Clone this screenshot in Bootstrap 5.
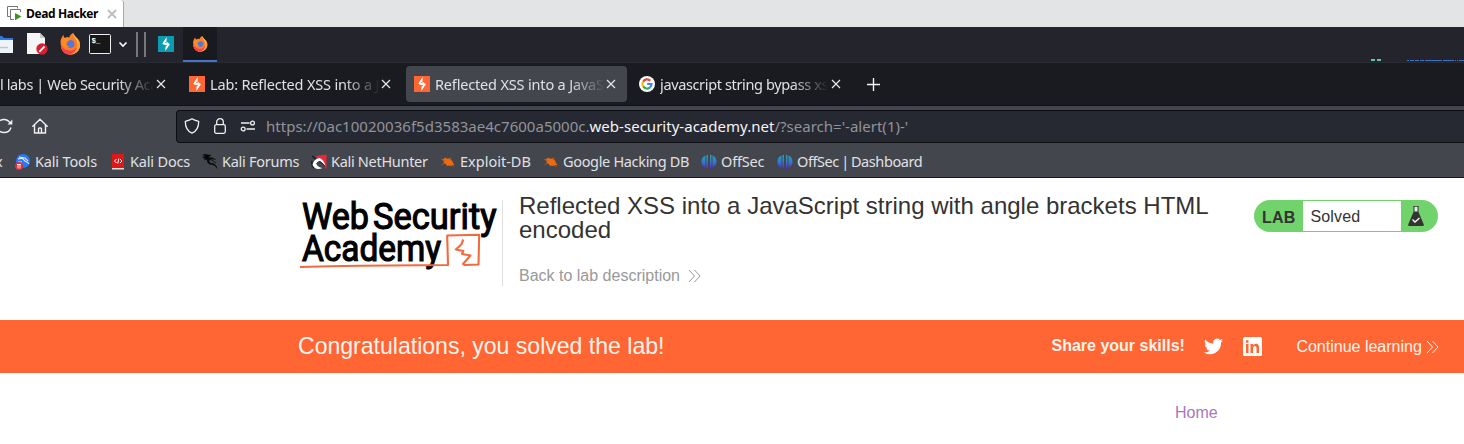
<!DOCTYPE html>
<html lang="en">
<head>
<meta charset="utf-8">
<title>Dead Hacker</title>
<meta name="viewport" content="width=device-width, initial-scale=1">
<link href="https://cdn.jsdelivr.net/npm/bootstrap@5.3.0/dist/css/bootstrap.min.css" rel="stylesheet">
<style>
body{font-family:"Liberation Sans",Arial,sans-serif;background:#fff;width:1464px;height:444px;overflow:hidden;color:#333332}
svg{display:block;flex:none}
.chrome{font-family:"Noto Sans",sans-serif;font-size:14.5px;letter-spacing:-.17px;line-height:20px;color:#e0e0e4;white-space:nowrap}
.vmbar{height:27px;background:#e3e4e6}
.vmtab{width:124px;height:27px;background:#fff;border-right:1px solid #aaa;border-top-right-radius:3px;padding-left:7px;font:bold 12px/27px "Open Sans","Noto Sans",sans-serif;color:#000}
.vmtab span{width:81px;margin-left:4px;letter-spacing:-.4px}
.panel{height:35px;background:#23242c;position:relative}
.panel .task{width:34px;height:35px;background:#191a1f;border-bottom:2px solid #4276c9;margin-left:9px;padding-left:9px}
.sep{width:2px;height:25px;background:#77787c}
.glimpse{position:absolute;right:0;bottom:0}
.tabs{height:44px;background:#1a1b20;border-top:1px solid #2a2b32;border-bottom:1px solid #101115;padding-top:3px}
.tabx{height:36px;border-radius:4px;padding-left:8px;margin-right:4px}
.tabx.on{background:#44464d}
.tabx .t{overflow:hidden;padding-bottom:1px;-webkit-mask-image:linear-gradient(90deg,#000 calc(100% - 36px),transparent);mask-image:linear-gradient(90deg,#000 calc(100% - 36px),transparent)}
.tools{height:71px;background:#44464d;overflow:hidden}
.toprow{height:37px;padding-top:4px}
.url{margin-left:121px;height:33px;background:#272932;border:1px solid #0d0e12;border-right:0;border-radius:4px 0 0 4px;color:#92939a;padding-left:7px}
.url svg{margin-bottom:1px}
.url span{font-size:15px;letter-spacing:.02px;padding-bottom:2px}
.url b{font-weight:400;color:#f4f4f6}
.marks{height:38px;padding-left:15px;position:relative}
.mk{gap:4px}
.marks span{padding-bottom:2px}
.edge{height:1px;background:#14151a}
.labhead{height:142px;padding-left:298px}
.brand{width:205px;height:86px;margin-top:22px;border-right:1px solid #e0e0e0}
.title{width:705px;margin:16px 0 0 16px}
.title h2{font-size:24px;line-height:24px;font-weight:400;margin:0;color:#333332}
.title a{font-size:16px;line-height:20px;color:#999;text-decoration:none;margin-top:24px}
.status{margin:22px 0 0 30px;width:184px;height:32px;border-radius:16px;background:#70d36c;font-size:16px;line-height:32px}
.status b{width:49px;padding-left:8px;letter-spacing:.2px;line-height:35px}
.status span{width:98px;height:30px;margin-top:1px;background:#fff;padding-left:7.5px;line-height:31px;letter-spacing:.15px}
.solved{height:53px;background:#f63;color:#fff3ec;padding-left:298px}
.solved p{font-size:23.05px;margin:0;width:753.5px;line-height:50px;padding-bottom:2px}
.homelink{font-size:16px;line-height:20px;color:#a877bc;text-decoration:none;margin:30px 0 0 1175px;display:block}
</style>
</head>
<body>
<svg width="0" height="0" class="position-absolute">
<defs>
<symbol id="bolt" viewBox="0 0 16 16"><path d="M8.700 1 8.500 5.300 6.900 7 8.600 7.300 8.500 5.600 11.900 8.300 9.700 11.600 7.300 14.900 7.500 10.800 9.200 9 5.700 8.700 4.300 7.400z" fill="#fff"/></symbol>
<symbol id="x" viewBox="0 0 10 10"><path d="M1 1l8 8M9 1L1 9" stroke="#e8e8ea" stroke-width="1.150" fill="none"/></symbol>
<symbol id="fox" viewBox="0 0 24 24"><path d="M2 12C1 8 3 4 5 2c0 2 .5 3 1.500 3.500C8 4 10 4 11 5c1-3 3-4.500 4.500-5 0 2 1.500 3 3 4.500C22 7 23 9 23 13c0 6-5 10.500-11 10.500S2 19 2 12z" fill="#ff7b27"/><path d="M15.500 0C15 5 20 6 20 12c0 5-4 7-8 7-5 0-8-3-10-7 0 7 4 11.500 10 11.500S23 19 23 13c0-6-6-8-7.500-13z" fill="#ffa032"/><path d="M2 12c2 5 6 7 10 7 4 0 6-1.500 7.500-4 0 4-4 8.500-8.500 8.500C6 23.500 2 19 2 12z" fill="#f5404f"/><path d="M15.500 0C15 4 20.500 6 20.500 13 23 8 17 5 15.500 0z" fill="#ffdc3e"/><circle cx="12.500" cy="12" r="4.300" fill="#5078d8"/><path d="M2 10c1-3 2-4 4.500-4.500 2 0 5 .5 6 1.500-1 2-4 2-4.500 3.500-.5 2 .5 4 4 4.500-4 2-9-1-10-5z" fill="#ff8a1f"/></symbol>
<symbol id="chev" viewBox="0 0 13 14"><path d="M1 1l5.500 6L1 13M6.500 1L12 7l-5.500 6" fill="none" stroke="currentColor" stroke-width="1"/></symbol>
<symbol id="bug" viewBox="0 0 16 16"><path d="M2 5.500l2-.8 1-1.200 1.500 1 3.500.3 2.300 2.200 1 2.500 1.200 1.500-2.500.2-1.500.8-2.500-.4-1 .6-.3-1.300-1.700-1.300-1.500-.3.500-1.500z" fill="#f06a0c"/><path d="M1 5l5 2M1.500 10.500l4-1.500M10 11l3.800 1.500M9 4l3 .5" stroke="#b35a1c" stroke-width=".7"/></symbol>
<linearGradient id="og" x1="0" y1="0" x2="0" y2="1"><stop offset="0" stop-color="#20a5b5"/><stop offset=".5" stop-color="#3378d1"/><stop offset="1" stop-color="#5726c8"/></linearGradient>
<symbol id="off" viewBox="0 0 16 16"><path d="M4.500 1.500v12Q.5 12 .5 7.500T4.500 1.500zM5.500 1.200 7 .8v14.400l-1.500-1zM9 .8l1.500.4v13L9 15.200zM11.500 1.500q4 1.500 4 6t-4 6z" fill="url(#og)"/></symbol>
</defs>
</svg>

<div class="chrome">
  <div class="vmbar"><div class="vmtab d-flex align-items-center">
    <svg width="15" height="15" viewBox="0 0 15 15"><path d="M3.500 10.500h-3V.5h10v2M7 13.500H3.500v-10h10V6" fill="none" stroke="#777"/><path d="M8 7l6.500 3.500L8 14.300z" fill="#3d9320"/></svg>
    <span>Dead Hacker</span>
    <svg width="10" height="10" viewBox="0 0 10 10"><path d="M1 1l8 8M9 1L1 9" stroke="#bcbcbc" stroke-width="1.800"/></svg>
  </div></div>

  <div class="panel d-flex align-items-center">
    <svg width="14" height="22" viewBox="0 0 14 22"><path d="M0 2h2l2 2h9v5H0z" fill="#2c78e4"/><path d="M0 6h13v13H0z" fill="#eef3f8"/><path d="M0 13.500h8" stroke="#b7c9d5" stroke-width="1.500"/></svg>
    <svg width="22" height="24" viewBox="0 0 22 24" style="margin:0 0 1px 13px"><path d="M0 1h13l5 5v16H0z" fill="#f5f5f5"/><path d="M13 1v5h5z" fill="#c8c8c8"/><circle cx="15" cy="17" r="5.700" fill="#d81f30"/><path d="M12.300 19.800l5.200-5.300" stroke="#fff" stroke-width="1.800"/></svg>
    <svg width="22" height="22" style="margin:0 0 1px 10px"><use href="#fox"/></svg>
    <svg width="22" height="20" viewBox="0 0 22 20" style="margin:0 0 1px 8px"><rect x=".5" y=".5" width="21" height="19" rx="1" fill="#171717" stroke="#eee"/><text x="2.500" y="9" font-family="Liberation Mono,monospace" font-weight="bold" font-size="7.500" fill="#fff">$_</text></svg>
    <svg width="10" height="7" viewBox="0 0 10 7" style="margin-left:7px"><path d="M1.500 1.500L5 5l3.500-3.500" fill="none" stroke="#fff" stroke-width="1.600"/></svg>
    <i class="sep" style="margin-left:8px"></i><i class="sep" style="margin-left:6px"></i>
    <svg width="16" height="16" style="margin:0 0 1px 12px;background:#0a9db1"><use href="#bolt"/></svg>
    <div class="task d-flex align-items-center"><svg width="16" height="16"><use href="#fox"/></svg></div>
    <svg class="glimpse" width="94" height="4" viewBox="0 0 94 4"><path d="M1 2h4M7 2h4" stroke="#5ac4ac" stroke-width="2"/><path d="M37 2.500h2m1 0h4m1 0h4m1 0h4m1 0h17m1 0h11m1 0h1m1 0h1m1 0h5" stroke="#3f73c6"/></svg>
  </div>

  <div class="tabs d-flex">
    <div class="tabx d-flex align-items-center" style="width:177px;padding-left:0"><span class="t" style="width:154px;letter-spacing:-.38px">l labs | Web Security Academy</span><svg width="10" height="10" style="margin-left:2px"><use href="#x"/></svg></div>
    <div class="tabx d-flex align-items-center" style="width:221px"><svg width="16" height="16" style="background:#f63"><use href="#bolt"/></svg><span class="t" style="width:170px;margin-left:5px">Lab: Reflected XSS into a JavaScript</span><svg width="10" height="10" style="margin-left:1px"><use href="#x"/></svg></div>
    <div class="tabx on d-flex align-items-center" style="width:221px"><svg width="16" height="16" style="background:#f63"><use href="#bolt"/></svg><span class="t" style="width:170px;margin-left:5px">Reflected XSS into a JavaScript</span><svg width="10" height="10" style="margin-left:1px"><use href="#x"/></svg></div>
    <div class="tabx d-flex align-items-center" style="width:221px"><svg width="16" height="16" viewBox="0 0 16 16"><circle cx="8" cy="8" r="8" fill="#fff"/><g fill="none" stroke-width="2.200"><path d="M4.200 5.600A4.500 4.500 0 0 1 11.300 4.700" stroke="#ea4335"/><path d="M4.200 10.400a4.500 4.500 0 0 1 0-4.800" stroke="#fbbc05"/><path d="M11 11.400a4.500 4.500 0 0 1-6.800-1" stroke="#34a853"/><path d="M8.200 8h4.300a4.500 4.500 0 0 1-1.500 3.400" stroke="#4285f4"/></g></svg><span class="t" style="width:168px;margin-left:5px;letter-spacing:-.36px">javascript string bypass xss</span><svg width="10" height="10" style="margin-left:3px"><use href="#x"/></svg></div>
    <svg width="13" height="13" viewBox="0 0 13 13" style="margin:12px 0 0 11px"><path d="M6.500 0v13M0 6.500h13" stroke="#f2f2f4" stroke-width="1.400"/></svg>
  </div>

  <div class="tools">
    <div class="toprow d-flex align-items-center">
      <svg width="13" height="16" viewBox="0 0 13 16" style="margin-bottom:1px"><path d="M0 2.600Q1.500 1.500 4 1.500q4 0 6.500 4M0 13.300Q1.500 14.500 4 14.500q5.500 0 7-5" fill="none" stroke="#f1f1f3" stroke-width="1.400"/><path d="M12.300 1.500v5H7.500z" fill="#f1f1f3"/></svg>
      <svg width="16" height="16" viewBox="0 0 16 16" style="margin:0 7px 1px 19px"><path d="M.8 8.200 8 1.200l7.200 7M2.500 7v8h11V7M6.500 15v-4a1 1 0 0 1 1-1h1a1 1 0 0 1 1 1v4" fill="none" stroke="#f1f1f3" stroke-width="1.400" stroke-linejoin="round" stroke-linecap="round"/></svg>
      <div class="url d-flex align-items-center flex-grow-1">
        <svg width="16" height="16" viewBox="0 0 16 16"><path d="M8 .8c2 1.500 4 2 6.700 2.600 0 5.600-1.700 9.500-6.700 11.800C3 12.900 1.300 9 1.300 3.400 4 2.800 6 2.300 8 .8z" fill="none" stroke="#f1f1f3" stroke-width="1.300" stroke-linejoin="round"/></svg>
        <svg width="14" height="16" viewBox="0 0 14 16" style="margin-left:13px"><rect x="1.700" y="6.700" width="10.600" height="8.600" rx="1.500" fill="none" stroke="#f1f1f3" stroke-width="1.300"/><path d="M3.700 6.500V4a3.300 3.300 0 0 1 6.600 0v2.500" fill="none" stroke="#f1f1f3" stroke-width="1.300"/></svg>
        <svg width="16" height="12" viewBox="0 0 16 12" style="margin-left:13px"><g fill="none" stroke="#f1f1f3" stroke-width="1.300"><path d="M1 3h8.500M6.500 9H15"/><circle cx="12.500" cy="3" r="1.900"/><circle cx="3.200" cy="9" r="1.900"/></g></svg>
        <span style="margin-left:10px">https://0ac10020036f5d3583ae4c7600a5000c.<b>web-security-academy.net</b>/?search='-alert(1)-'</span>
      </div>
    </div>
    <div class="marks d-flex align-items-center">
      <span class="position-absolute" style="left:-5px">x</span>
      <div class="mk d-flex align-items-center" style="width:95px"><svg width="16" height="16" viewBox="0 0 16 16"><circle cx="8" cy="7" r="7" fill="#2777ff"/><path d="M3 5c3-1 5-1 6 1s3 1 5 4M4 3l6 1 3 3M3 8l4 0" stroke="#dcecff" stroke-width="1.200" fill="none"/><circle cx="4" cy="12" r="4" fill="#e22c38"/><path d="M2 10.500h4M3 10.500v4M5 10.500v4" stroke="#fff" fill="none" stroke-width=".9"/></svg><span>Kali Tools</span></div>
      <div class="mk d-flex align-items-center" style="width:92px"><svg width="16" height="16" viewBox="0 0 16 16"><path d="M2 0h12v16H2z" fill="#de1717"/><path d="M2 14h12v1.500H2z" fill="#ddd"/><path d="M6.500 5 4.500 7l2 2M10 5l2 2-2 2M8.800 4.500 7.800 9.500" stroke="#fff" fill="none"/></svg><span>Kali Docs</span></div>
      <div class="mk d-flex align-items-center" style="width:109px"><svg width="16" height="16" viewBox="0 0 16 16"><path d="M0 1.800q4-1 7 1.500l4 .5 4 2.700-4-1.300-3 .3q-1.500 2.500 1 3.500 6 .5 6.500 6.500-2.500-4.500-6-4.700-5-.8-4.500-5L0 3.500l3-.5z" fill="#090a0c"/><path d="M1 0l5 3 3-2M2 6l3-1M8 5l6 4" stroke="#090a0c" stroke-width=".8"/></svg><span style="letter-spacing:-.26px">Kali Forums</span></div>
      <div class="mk d-flex align-items-center" style="width:129px"><svg width="16" height="16" viewBox="0 0 16 16"><path d="M5 2 15.500.5V15z" fill="#e9293b"/><path d="M1 2l5 4M1 7q-1 4 2 7" stroke="#15161a" stroke-width="1.200" fill="none"/><path d="M1.500 11q1-6 7-7 4 1 6 8l-4-4q-3-1-5 2 1 3 6 4-7 3-10-3z" fill="#fff"/><path d="M5.500 10q2-4 4.500-2l4 4.500" fill="none" stroke="#1a1a1e"/></svg><span style="letter-spacing:-.3px">Kali NetHunter</span></div>
      <div class="mk d-flex align-items-center" style="width:103px"><svg width="16" height="16"><use href="#bug"/></svg><span style="letter-spacing:0">Exploit-DB</span></div>
      <div class="mk d-flex align-items-center" style="width:158px"><svg width="16" height="16"><use href="#bug"/></svg><span style="letter-spacing:-.33px">Google Hacking DB</span></div>
      <div class="mk d-flex align-items-center" style="width:76px"><svg width="16" height="16"><use href="#off"/></svg><span>OffSec</span></div>
      <div class="mk d-flex align-items-center"><svg width="16" height="16"><use href="#off"/></svg><span style="letter-spacing:-.42px;word-spacing:-1.100px">OffSec | Dashboard</span></div>
    </div>
  </div>
  <div class="edge"></div>
</div>

<header class="labhead d-flex align-items-start">
  <div class="brand">
    <svg width="202" height="76" viewBox="0 0 202 76" style="overflow:visible">
      <g font-family="Roboto,sans-serif" font-weight="400" font-size="37" fill="#000" stroke="#000" stroke-width="1.200"><text x="4" y="28.600" textLength="67" lengthAdjust="spacingAndGlyphs">Web</text><text x="75" y="28.600" textLength="123.500" lengthAdjust="spacingAndGlyphs">Security</text><text x="4" y="61" textLength="139" lengthAdjust="spacingAndGlyphs">Academy</text></g>
      <path d="M2 67q30-1 60-1.200t88-.8l-.8-29.500 32-.8-.7 29.800-14 .5-1.500-1 7.500-8.500-8.500-1.500 1.300-3-7.500-1.500 5.500-5 2-5" fill="none" stroke="#f26a3d" stroke-width="2.100" stroke-linejoin="round"/>
    </svg>
  </div>
  <div class="title">
    <h2>Reflected XSS into a JavaScript string with angle brackets HTML encoded</h2>
    <a class="d-flex align-items-center" href="#">Back to lab description<svg width="13" height="14" style="margin-left:8px"><use href="#chev"/></svg></a>
  </div>
  <div class="status d-flex"><b>LAB</b><span>Solved</span>
    <svg width="16" height="20" viewBox="0 0 16 20" style="margin:6px 0 0 7px"><path d="M5.500 1v5L.3 18.200q-.5 1.500 1 1.800h13.400q1.500-.3 1-1.800L10.500 6V1z" fill="#333332"/><path d="M5 .5h6" stroke="#555"/><path d="M6.500 1h3v4.500h-3z" fill="#e8f5e8"/><path d="M4.500 13.500l2.500 2.500 4.500-4" fill="none" stroke="#fff" stroke-width="1.300"/></svg>
  </div>
</header>

<section class="solved d-flex align-items-center">
  <p>Congratulations, you solved the lab!</p>
  <b style="width:152.500px;padding-bottom:1px">Share your skills!</b>
  <svg width="19" height="17" viewBox="0 0 24 20"><path d="M24 2.400a10 10 0 0 1-2.800.8A5 5 0 0 0 23.300.5a10 10 0 0 1-3.100 1.200A4.900 4.900 0 0 0 11.800 6.200 14 14 0 0 1 1.700 1a4.900 4.900 0 0 0 1.500 6.600A5 5 0 0 1 1 7a4.900 4.900 0 0 0 3.900 4.900 5 5 0 0 1-2.200.1 4.900 4.900 0 0 0 4.600 3.400A10 10 0 0 1 0 17.500 14 14 0 0 0 21.500 5 10 10 0 0 0 24 2.400z" fill="#fff"/></svg>
  <svg width="19" height="19" viewBox="0 0 19 19" style="margin-left:20px"><rect width="19" height="19" rx="1.500" fill="#fff"/><path d="M3 7h2.500v9H3zM3 3.200h2.500v2.500H3zM7.500 7H10v1.300Q11 6.800 13 6.800q3 0 3 3.700V16h-2.500v-5q0-2-1.700-2T10 11v5H7.500z" fill="#f63"/></svg>
  <span class="d-flex align-items-center" style="margin-left:34.400px">Continue learning<svg width="13" height="14" style="margin-left:4px"><use href="#chev"/></svg></span>
</section>
<a class="homelink" href="#">Home</a>
<script src="https://cdn.jsdelivr.net/npm/bootstrap@5.3.0/dist/js/bootstrap.bundle.min.js"></script>
</body>
</html>
